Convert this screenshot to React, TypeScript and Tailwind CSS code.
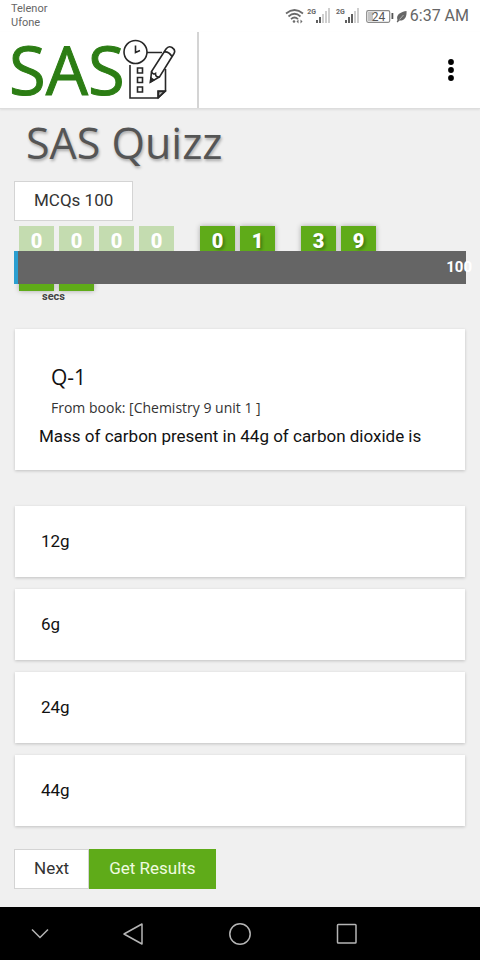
import React from "react";
import clsx from "clsx";

const options = ["12g", "6g", "24g", "44g"];

function WifiIcon() {
  return (
    <svg width="20" height="16" viewBox="0 0 20 16" fill="none" stroke="#6b6b6b" strokeWidth="1.700">
      <path d="M1 5.500Q9.500-1.500 18 5.500" />
      <path d="M3.500 8.500Q9.500 3 15.500 8.500" />
      <path d="M6 11.200Q9.500 7.800 13 11.200" />
      <circle cx="9" cy="13.500" r="1.300" fill="#6b6b6b" stroke="none" />
      <path d="M13.500 11.500l-2 2 2 2zM15.500 11.500l2 2-2 2z" fill="#6b6b6b" stroke="none" />
    </svg>
  );
}

function SignalIcon({ bars }: { bars: number }) {
  return (
    <span className="flex">
      <span className="text-[7px] leading-[8px] font-bold">2G</span>
      <svg width="16" height="16" viewBox="0 0 16 16" className="-ml-px">
        {[3, 6, 9, 12, 15].map((h, i) => (
          <rect key={h} x={i * 3 + 1} y={15 - h} width="2" height={h} fill={i < bars ? "#5f5f5f" : "#cfcfcf"} />
        ))}
      </svg>
    </span>
  );
}

function StatusBar() {
  return (
    <div className="flex h-8 items-start justify-between pr-[11px] pl-[11px] text-[#666]">
      <div className="pt-[2px] text-[11px] leading-[14px]">
        <p>Telenor</p>
        <p>Ufone</p>
      </div>
      <div className="flex h-8 items-center">
        <WifiIcon />
        <span className="ml-[2px] flex gap-[5px]">
          <SignalIcon bars={2} />
          <SignalIcon bars={3} />
        </span>
        <svg width="28" height="14" viewBox="0 0 28 14" className="ml-[6px]">
          <rect x=".7" y="1.700" width="23" height="11.600" rx="1.500" fill="#fff" stroke="#8a8a8a" strokeWidth="1.200" />
          <rect x="2" y="3" width="5" height="9" fill="#c4c4c4" />
          <rect x="25.500" y="4" width="1.800" height="6" fill="#555" />
          <text x="12.500" y="11.700" fontSize="12" textAnchor="middle" fill="#555">24</text>
        </svg>
        <svg width="11" height="13" viewBox="0 0 11 13" className="ml-[2px]">
          <path d="M10.500 1C11 7 8.500 11 3.500 10.500L1.500 12.500.7 11.700 1.500 10C-.5 4.500 5 2 10.500 1Z" fill="#666" />
          <path d="M3.500 9.500L7.500 5" stroke="#fff" strokeWidth=".5" />
        </svg>
        <span className="ml-[3px] text-base">6:37 AM</span>
      </div>
    </div>
  );
}

function QuizIcon() {
  return (
    <svg width="54" height="62" viewBox="0 0 54 62" fill="none" stroke="#272727" strokeWidth="1.600">
      <circle cx="12.500" cy="13" r="11.500" />
      <path d="M12.500 6.500V13.500L17 11.500M24 13.500H39M7 26V59H35L42.500 51.500V30M35 59V52H42.500" />
      <path d="M35.500 52.500h6.500l-6.500 6z" fill="#272727" fillOpacity=".3" />
      <path d="M14.500 29h5v5h-5zM14.500 38.500h5v5h-5zM14.500 48h5v5h-5z" />
      <path d="M27.500 43L28.500 32.500 43 10Q45.500 6.500 49 8.500 53 11 51 14.500L36.500 38Z" fill="#fff" />
      <path d="M28.500 32.500Q30 36 32.500 34.500 32.500 38.500 36.500 38M41 13Q45.500 12 49 17.500" />
      <path d="M27.500 43l.4-4 2.800 2z" fill="#272727" />
    </svg>
  );
}

function Header() {
  return (
    <header className="flex h-[77px] items-stretch justify-between border-b border-[#ddd] shadow-[0_1px_2px_rgba(0,0,0,0.08)]">
      <a href="#" aria-label="SAS home" className="flex w-[199px] items-center border-r-2 border-[#d4d4d4] pl-[9px] text-[#2c7d14]">
        <span className="w-[114px] pb-[2px] font-['Open_Sans',sans-serif] text-[67px] leading-[72px] font-medium [-webkit-text-stroke:1px]">
          SAS
        </span>
        <QuizIcon />
      </a>
      <button aria-label="Menu" className="mr-4 flex w-[26px] items-center justify-center">
        <svg width="6" height="24" viewBox="0 0 6 24">
          <circle cx="3" cy="4" r="2.900" />
          <circle cx="3" cy="12" r="2.900" />
          <circle cx="3" cy="20" r="2.900" />
        </svg>
      </button>
    </header>
  );
}

function Digit({ value, faded }: { value?: string; faded?: boolean }) {
  return (
    <span
      className={clsx(
        "flex h-[30px] w-[35px] items-center justify-center text-xl font-black text-white",
        faded
          ? "bg-[#c4dcb0]"
          : "bg-[#5fab19] shadow-[0_0_5px_rgba(0,0,0,0.3)] [text-shadow:2px_2px_3px_rgba(0,0,0,0.3)]"
      )}
    >
      {value}
    </span>
  );
}

function Countdown() {
  return (
    <div className="relative mt-[5px] pl-[5px]">
      <div className="flex gap-[26px]">
        <div className="flex gap-[5px]">
          {["0", "0", "0", "0"].map((d, i) => (
            <Digit key={i} value={d} faded />
          ))}
        </div>
        <div className="flex gap-[5px]">
          <Digit value="0" />
          <Digit value="1" />
        </div>
        <div className="flex gap-[5px]">
          <Digit value="3" />
          <Digit value="9" />
        </div>
      </div>
      <div className="mt-[5px] flex w-[75px] flex-wrap gap-x-[5px]">
        <Digit />
        <Digit />
        <span className="pl-[23px] text-[11px] leading-3 font-bold text-[#444]">secs</span>
      </div>
      {/* progress bar covers the timer */}
      <div className="absolute inset-x-0 top-[25px] flex h-[33px] items-center justify-end border-l-4 border-[#2b9fd0] bg-[#656565]">
        <span className="-mr-[6px] text-[15px] font-bold text-white">100</span>
      </div>
    </div>
  );
}

export default function App() {
  return (
    <div className="flex min-h-screen flex-col bg-[#f0f0f0] font-[Roboto,sans-serif] text-[#111]">
      <div className="bg-white">
        <StatusBar />
        <Header />
      </div>

      <main className="flex-1 px-[14px] pb-[17px]">
        <h1 className="mt-2 pl-3 font-['Open_Sans',sans-serif] text-[43px] leading-[52px] text-[#555] [text-shadow:1px_2px_3px_rgba(0,0,0,0.3)]">
          SAS Quizz
        </h1>
        <button className="mt-3 h-10 border border-[#d4d4d4] bg-white px-[19px] text-[17px] text-[#333]">MCQs 100</button>

        <Countdown />

        <section className="mt-[26px] mr-px ml-px h-[141px] bg-white px-6 pt-8 shadow-[0_1px_3px_rgba(0,0,0,0.2)]">
          <h2 className="pl-3 font-['Open_Sans',sans-serif] text-[21px] leading-8">Q-1</h2>
          <p className="pl-3 font-['Open_Sans',sans-serif] text-sm leading-[30px] text-[#333]">
            From book: [Chemistry 9 unit 1 ]
          </p>
          <p className="text-[17px] leading-[26px]">Mass of carbon present in 44g of carbon dioxide is</p>
        </section>

        <div className="mx-px mt-9 flex flex-col gap-3">
          {options.map((option) => (
            <button
              key={option}
              className="h-[71px] bg-white px-[26px] text-left text-[17px] shadow-[0_1px_3px_rgba(0,0,0,0.2)]"
            >
              {option}
            </button>
          ))}
        </div>

        <div className="mt-[23px] flex">
          <button className="h-10 border border-[#d4d4d4] bg-white px-[19px] text-[17px] text-[#333]">Next</button>
          <button className="h-10 bg-[#5fab19] px-5 text-[17px] text-[#f0fbe0]">Get Results</button>
        </div>
      </main>

      <nav className="flex h-[53px] items-center bg-black text-[#b5b5b5]">
        <button aria-label="Hide" className="flex w-1/6 justify-center">
          <svg width="18" height="12" viewBox="0 0 18 12" fill="none" stroke="currentColor" strokeWidth="1.500">
            <path d="M1 1.500L9 9.500L17 1.500" />
          </svg>
        </button>
        <button aria-label="Back" className="flex w-2/9 justify-center">
          <svg width="22" height="24" viewBox="0 0 22 24" fill="none" stroke="currentColor" strokeWidth="1.500" strokeLinejoin="round">
            <path d="M20 2V22L2 12Z" />
          </svg>
        </button>
        <button aria-label="Home" className="flex w-2/9 justify-center">
          <svg width="24" height="24" viewBox="0 0 24 24" fill="none" stroke="currentColor" strokeWidth="1.500">
            <circle cx="12" cy="12" r="10.200" />
          </svg>
        </button>
        <button aria-label="Recent apps" className="flex w-2/9 justify-center">
          <svg width="22" height="22" viewBox="0 0 22 22" fill="none" stroke="currentColor" strokeWidth="1.500">
            <rect x="1.500" y="1.500" width="18.500" height="18.500" rx=".8" />
          </svg>
        </button>
      </nav>
    </div>
  );
}
